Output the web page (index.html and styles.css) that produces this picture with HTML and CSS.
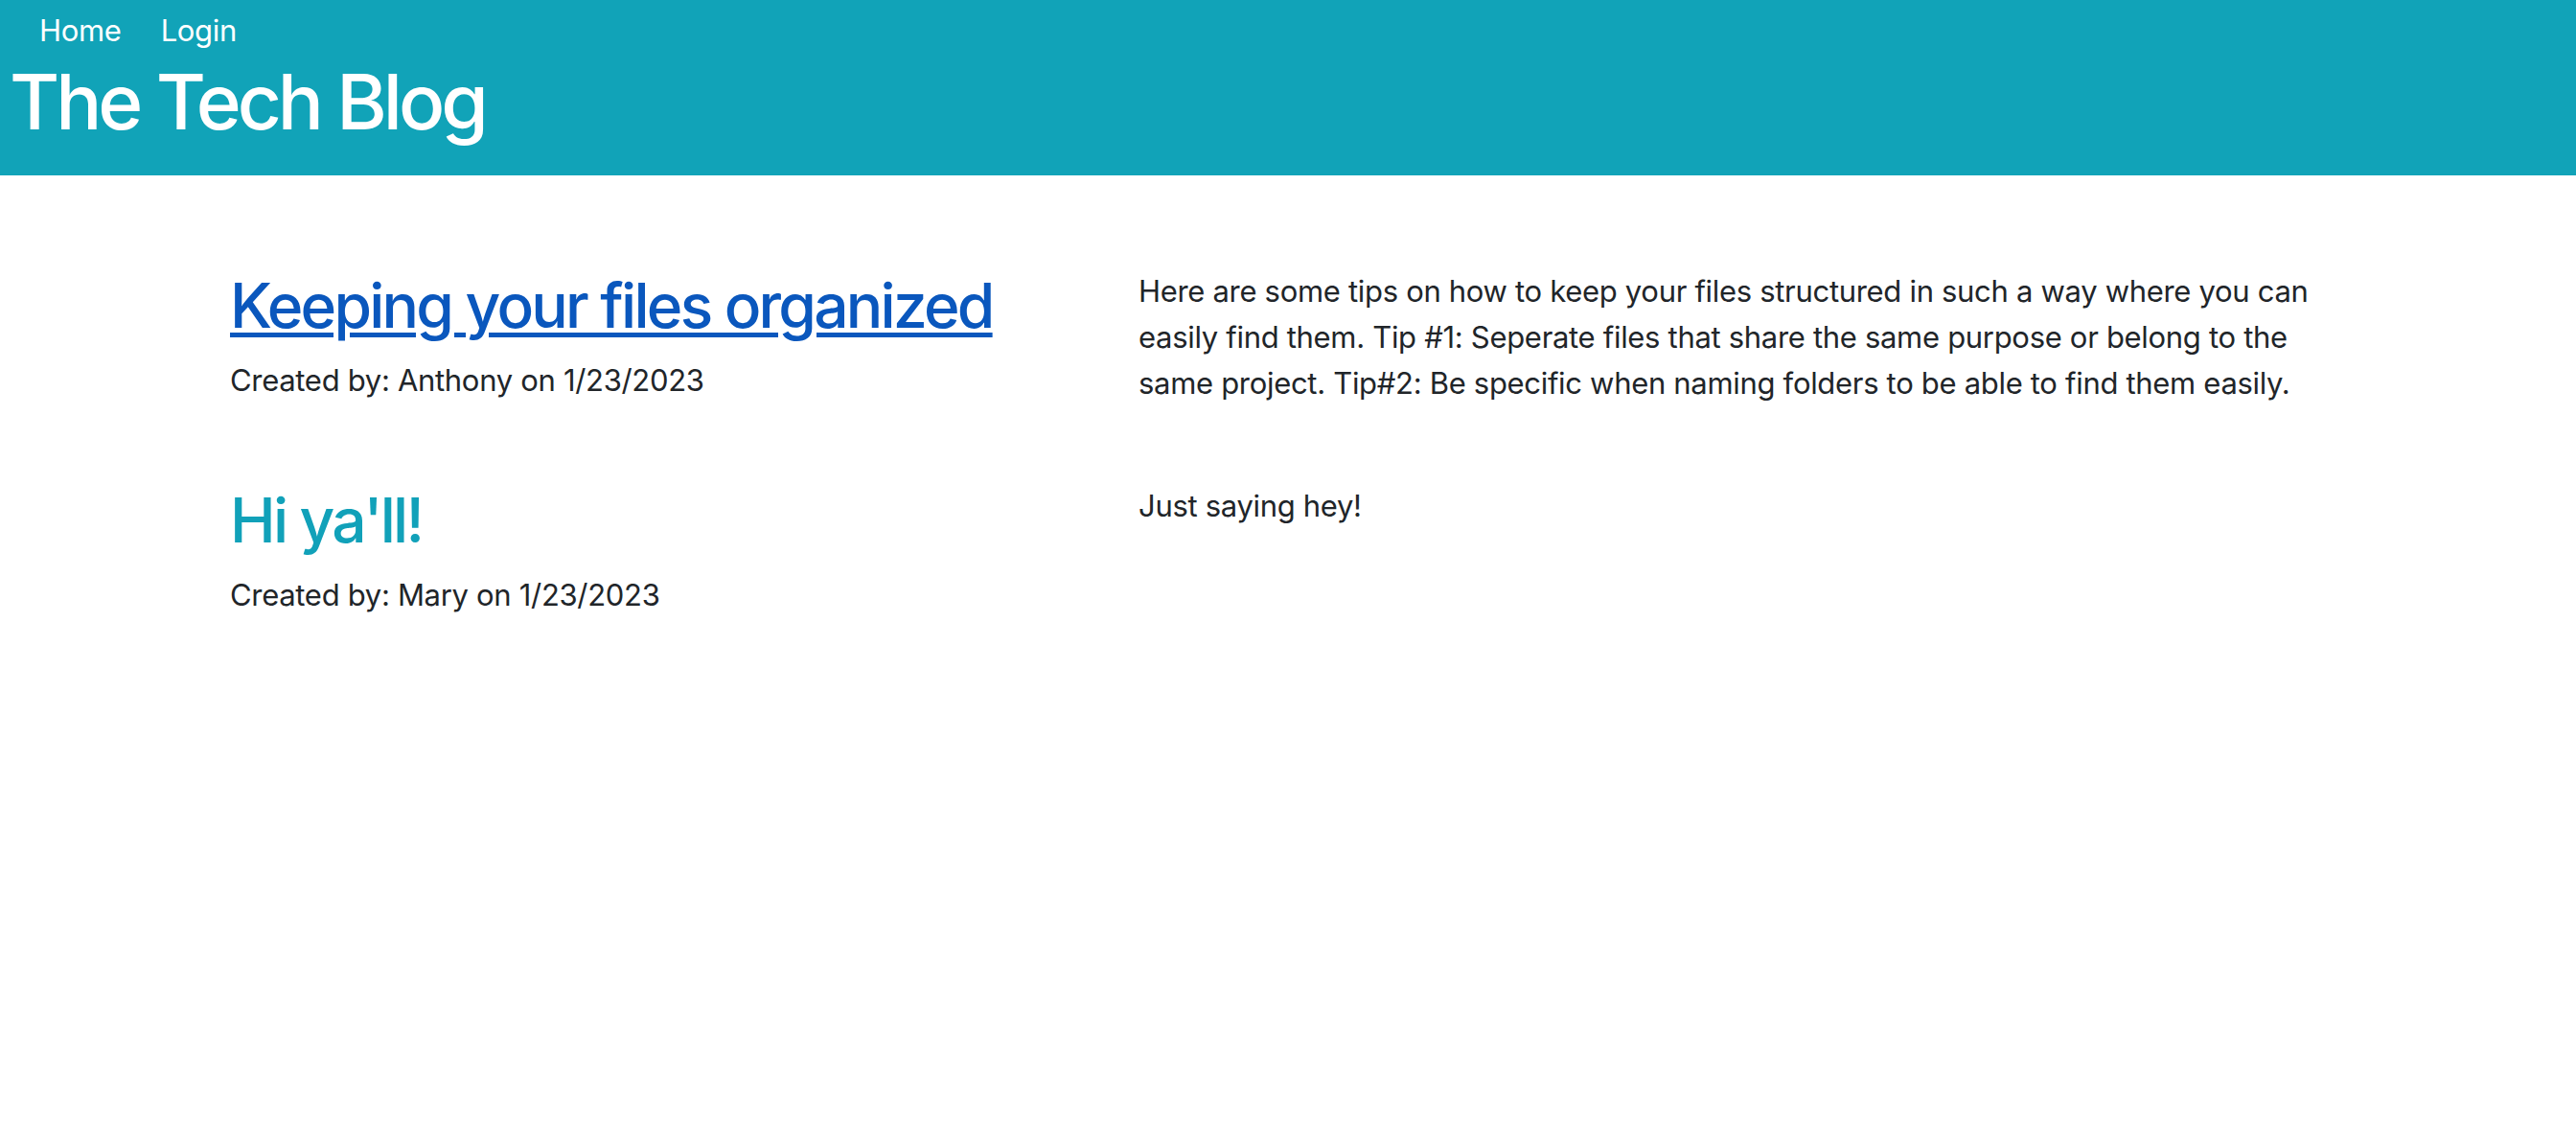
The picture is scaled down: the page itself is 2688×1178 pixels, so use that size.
FILE: index.html
```html
<!DOCTYPE html>
<html lang="en">
<head>
<meta charset="utf-8">
<title>The Tech Blog</title>
<link rel="stylesheet" href="styles.css">
</head>
<body>
<header class="site-header">
  <nav class="nav">
    <a class="nav-link" href="#">Home</a>
    <a class="nav-link" href="#">Login</a>
  </nav>
  <h1 class="site-title">The Tech Blog</h1>
</header>
<main class="posts">
  <article class="post">
    <div class="post-head">
      <h2 class="post-title"><a class="post-link post-link--active" href="#">Keeping your files organized</a></h2>
      <p class="post-meta">Created by: Anthony on 1/23/2023</p>
    </div>
    <p class="post-body">Here are some tips on how to keep your files structured in such a way where you can easily find them. Tip #1: Seperate files that share the same purpose or belong to the same project. Tip#2: Be specific when naming folders to be able to find them easily.</p>
  </article>
  <article class="post">
    <div class="post-head">
      <h2 class="post-title"><a class="post-link" href="#">Hi ya'll!</a></h2>
      <p class="post-meta">Created by: Mary on 1/23/2023</p>
    </div>
    <p class="post-body">Just saying hey!</p>
  </article>
</main>
</body>
</html>
```
FILE: styles.css
```css
html, body {
  margin: 0;
  padding: 0;
  background: #ffffff;
}

body {
  font-family: Inter, "Noto Sans", "Liberation Sans", sans-serif;
  font-size: 31px;
  line-height: 48px;
  letter-spacing: -0.01em;
  color: #212529;
}

.site-header {
  background: #11a3b8;
  padding: 8px 10px 29px;
}

.nav {
  display: flex;
  gap: 41px;
  padding-left: 31px;
}

.nav-link {
  color: #ffffff;
  text-decoration: none;
}

.site-title {
  margin: 2px 0 0;
  font-size: 80px;
  line-height: 96px;
  font-weight: 500;
  letter-spacing: -0.05em;
  color: #ffffff;
}

.posts {
  display: flex;
  flex-direction: column;
  gap: 80px;
  padding: 97px 240px 0;
}

.post {
  display: flex;
  align-items: flex-start;
}

.post-head {
  flex: none;
  width: 948px;
}

.post-title {
  margin: 0 0 16px;
  font-size: 64px;
  line-height: 77px;
  font-weight: 500;
  letter-spacing: -0.043em;
}

.post-link {
  color: #11a1b9;
  text-decoration: none;
}

.post-link--active {
  color: #0a57bd;
  text-decoration: underline;
  text-decoration-thickness: 5px;
  text-underline-offset: 5px;
}

.post-meta {
  margin: 0;
}

.post-body {
  flex: 1;
  margin: 0;
}
```
